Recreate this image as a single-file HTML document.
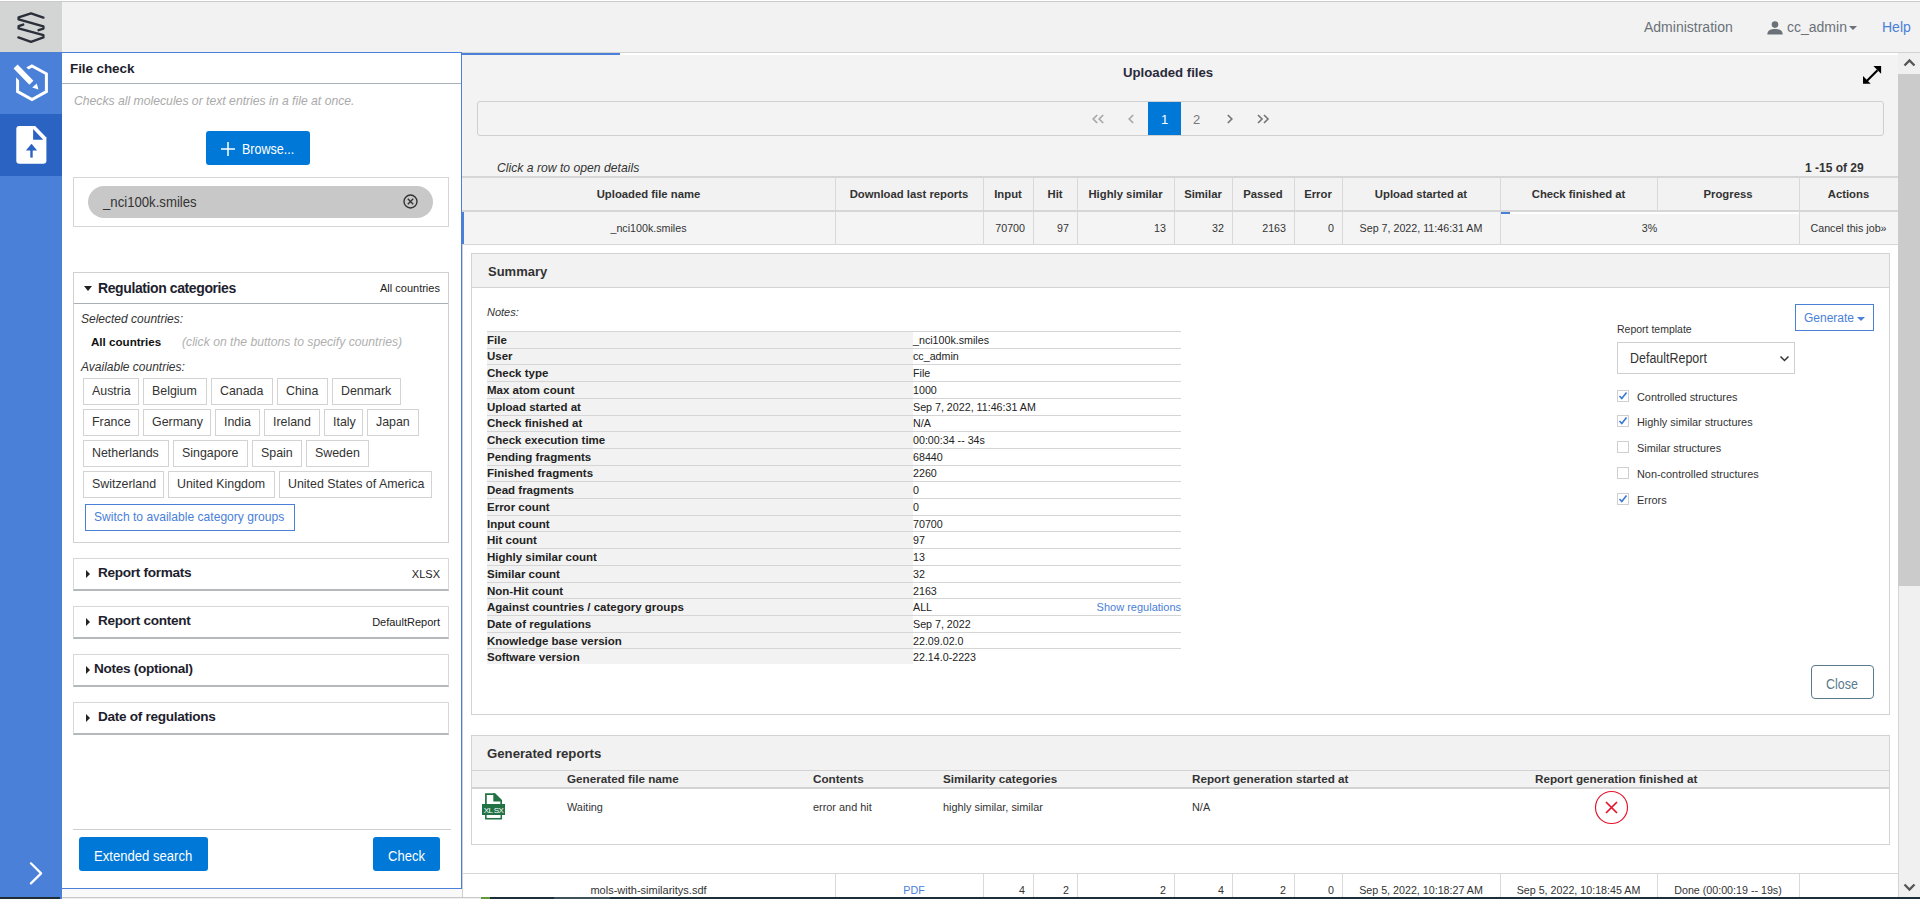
<!DOCTYPE html>
<html><head><meta charset="utf-8">
<style>
*{box-sizing:border-box;margin:0;padding:0}
html,body{width:1920px;height:899px;overflow:hidden;background:#fff;font-family:"Liberation Sans",sans-serif;color:#333}
.a{position:absolute}
.t{position:absolute;white-space:nowrap;line-height:1}
/* sidebar */
#sb{left:0;top:0;width:62px;height:899px;background:#4a80d8}
#logo{left:0;top:0;width:62px;height:52px;background:#d3d4d4}
#hdr{left:62px;top:0;width:1858px;height:53px;background:#f2f2f2;border-top:2px solid #fff;border-bottom:1px solid #d2d2d2}
/* left panel */
#lp{left:62px;top:52px;width:400px;height:837px;background:#fff;border-top:1px solid #4a80d8;border-right:1px solid #4a80d8;border-bottom:1px solid #4a80d8}
.box{position:absolute;left:73px;width:376px;border:1px solid #d0d0d0;background:#fff}
.cbtn{position:absolute;height:27px;border:1px solid #d3d3d3;background:#fff;font-size:12.4px;color:#333;line-height:25px;text-align:left;padding-left:8px;white-space:nowrap}
.btn{position:absolute;background:#0078d7;color:#fff;border-radius:3px;text-align:center}
.ph{position:absolute;left:73px;width:376px;height:33px;background:#fff;border:1px solid #d8d8d8;border-bottom:2px solid #b4b9be}
.ph .tt{position:absolute;left:24px;top:7px;font-size:13.6px;letter-spacing:-0.3px;font-weight:bold;color:#1e1e2e;line-height:1}
.ph .tri{position:absolute;left:12px;top:11px;width:0;height:0;border-top:4px solid transparent;border-bottom:4px solid transparent;border-left:4px solid #222}
.ph .rv{position:absolute;right:8px;top:10px;font-size:11px;color:#222;line-height:1}
.hd{font-size:11.3px;font-weight:bold;color:#333;text-align:center}
.rw{font-size:10.7px;color:#333}
.rw2{font-size:10.9px;color:#333}
.gh{font-size:11.7px;font-weight:bold;color:#333}
table.st{border-collapse:collapse;width:694px;font-size:10.7px;color:#222}
table.st th{background:#f2f2f2;font-weight:bold;text-align:left;width:426px;height:16.67px;line-height:14px;padding:1px 0 0 0;vertical-align:top;border-top:1px solid #d5d5d5;font-size:11.5px}
table.st td{background:#fff;text-align:left;height:16.67px;line-height:14px;padding:1px 0 0 0;vertical-align:top;border-top:1px solid #d5d5d5;position:relative}
.sl{font-size:11.5px;font-weight:bold;color:#222}
.sv{font-size:10.7px;color:#222}
</style></head><body>
<div id="sb" class="a"></div>
<div class="a" style="left:0;top:0;width:1920px;height:1px;background:#fff;z-index:5"></div><div class="a" style="left:0;top:1px;width:1920px;height:1px;background:#cbcbcb;z-index:5"></div>
<div id="logo" class="a">
<svg width="62" height="52" style="position:absolute;left:0;top:0"><g fill="none" stroke="#2b2f3a" stroke-width="2.4" stroke-linejoin="round" stroke-linecap="round">
<polyline points="43.4,17.6 31,13.4 18.6,17.4 18.6,19.4 43.4,26.4 43.4,28.6 38.6,30.2"/>
<polyline points="23.2,24.6 18.6,26.2 18.6,28.4 43.4,35.2 43.4,37.4 31,41.8 18.4,37.4"/>
</g></svg>
</div>
<div class="a" style="left:0;top:114px;width:62px;height:62px;background:#2a63c2"></div>
<svg class="a" style="left:0;top:52px" width="62" height="124">
<polygon points="32,14 46.4,21.8 46.4,39.6 32,47.6 17.6,39.6 17.6,21.8" fill="none" stroke="#fff" stroke-width="3"/>
<line x1="8" y1="6.8" x2="31.4" y2="30.7" stroke="#4a80d8" stroke-width="14.5"/>
<line x1="15.6" y1="14.5" x2="31.4" y2="30.7" stroke="#fff" stroke-width="5.6"/>
<polygon points="32.2,35.6 36.8,31.4 38.4,37.5" fill="#fff"/>
<path d="M19.3,74.1 H35.2 L46.4,85.5 V108.7 a3,3 0 0 1 -3,3 H19.3 a3,3 0 0 1 -3,-3 V77.1 a3,3 0 0 1 3,-3z" fill="#fff"/>
<polygon points="33.1,77 33.1,87.7 43.2,87.7" fill="#2a63c2"/>
<polygon points="25.9,98.6 31.5,91.7 37.1,98.6" fill="#2a63c2"/>
<rect x="30.3" y="98" width="2.4" height="7.6" fill="#2a63c2"/>
</svg>
<svg class="a" style="left:0;top:850px" width="62" height="40"><polyline points="30.9,13.3 41.1,23.4 30.9,33.4" fill="none" stroke="#fff" stroke-width="2.2" stroke-linecap="round" stroke-linejoin="round"/></svg>

<div id="hdr" class="a">
<div class="t" style="left:1582px;top:18px;font-size:14px;color:#6b7178">Administration</div>
<svg class="a" style="left:1705px;top:19px" width="18" height="14"><circle cx="8" cy="3.6" r="3.3" fill="#6b7178"/><path d="M0.3,13.5 C0.3,8.8 4.2,7.9 8,7.9 C11.8,7.9 15.7,8.8 15.7,13.5Z" fill="#6b7178"/></svg>
<div class="t" style="left:1725px;top:18px;font-size:14px;color:#6b7178">cc_admin</div>
<div class="a" style="left:1787px;top:24px;width:0;height:0;border-left:4px solid transparent;border-right:4px solid transparent;border-top:4px solid #6b7178"></div>
<div class="t" style="left:1820px;top:18px;font-size:14px;color:#4a80d8">Help</div>
</div>

<div id="lp" class="a"></div>
<div class="t" style="left:70px;top:62px;font-size:13.5px;letter-spacing:-0.1px;font-weight:bold;color:#1e1e2e">File check</div>
<div class="a" style="left:62px;top:83px;width:399px;height:1px;background:#a9b0b8"></div>
<div class="t" style="left:74px;top:95px;font-size:12.2px;font-style:italic;color:#aaa">Checks all molecules or text entries in a file at once.</div>
<div class="btn" style="left:206px;top:131px;width:104px;height:34px"><svg class="a" style="left:14px;top:10px" width="16" height="16"><path d="M8,1 V15 M1,8 H15" stroke="#fff" stroke-width="1.5"/></svg><span class="t" style="left:36px;top:11px;font-size:14px;transform:scaleX(0.895);transform-origin:0 0">Browse...</span></div>
<div class="box" style="top:177px;height:50px;border-color:#d6d6d6"></div>
<div class="a" style="left:88px;top:186px;width:345px;height:32px;border-radius:16px;background:#c8c8c8"></div>
<div class="t" style="left:103px;top:195px;font-size:14px;color:#333;transform:scaleX(0.94);transform-origin:0 0">_nci100k.smiles</div>
<svg class="a" style="left:402px;top:193px" width="17" height="17"><circle cx="8.5" cy="8.5" r="6.5" fill="none" stroke="#333" stroke-width="1.4"/><path d="M5.8,5.8 L11.2,11.2 M11.2,5.8 L5.8,11.2" stroke="#333" stroke-width="1.4"/></svg>

<!-- regulation categories -->
<div class="box" style="top:272px;height:271px"></div>
<div class="a" style="left:74px;top:303px;width:374px;height:1px;background:#a9b0b8"></div>
<div class="a" style="left:84px;top:286px;width:0;height:0;border-left:4px solid transparent;border-right:4px solid transparent;border-top:5px solid #222"></div>
<div class="t" style="left:98px;top:281px;font-size:14px;letter-spacing:-0.4px;font-weight:bold;color:#1e1e2e">Regulation categories</div>
<div class="t" style="left:380px;top:283px;font-size:11px;color:#222">All countries</div>
<div class="t" style="left:81px;top:313px;font-size:12px;font-style:italic;color:#333">Selected countries:</div>
<div class="t" style="left:91px;top:336px;font-size:11.6px;font-weight:bold;color:#111">All countries</div>
<div class="t" style="left:182px;top:336px;font-size:12.2px;font-style:italic;color:#b0b0b0">(click on the buttons to specify countries)</div>
<div class="t" style="left:81px;top:361px;font-size:12px;font-style:italic;color:#333">Available countries:</div>

<div class="cbtn" style="left:83px;top:378px;width:56px">Austria</div>
<div class="cbtn" style="left:143px;top:378px;width:64px">Belgium</div>
<div class="cbtn" style="left:211px;top:378px;width:62px">Canada</div>
<div class="cbtn" style="left:277px;top:378px;width:51px">China</div>
<div class="cbtn" style="left:332px;top:378px;width:69px">Denmark</div>

<div class="cbtn" style="left:83px;top:409px;width:56px">France</div>
<div class="cbtn" style="left:143px;top:409px;width:68px">Germany</div>
<div class="cbtn" style="left:215px;top:409px;width:45px">India</div>
<div class="cbtn" style="left:264px;top:409px;width:56px">Ireland</div>
<div class="cbtn" style="left:324px;top:409px;width:39px">Italy</div>
<div class="cbtn" style="left:367px;top:409px;width:52px">Japan</div>

<div class="cbtn" style="left:83px;top:440px;width:86px">Netherlands</div>
<div class="cbtn" style="left:173px;top:440px;width:75px">Singapore</div>
<div class="cbtn" style="left:252px;top:440px;width:50px">Spain</div>
<div class="cbtn" style="left:306px;top:440px;width:63px">Sweden</div>

<div class="cbtn" style="left:83px;top:471px;width:81px">Switzerland</div>
<div class="cbtn" style="left:168px;top:471px;width:107px">United Kingdom</div>
<div class="cbtn" style="left:279px;top:471px;width:153px">United States of America</div>

<div class="cbtn" style="left:85px;top:504px;width:210px;border-color:#4a80d8;color:#4a80d8;font-size:12.1px">Switch to available category groups</div>

<div class="ph" style="top:558px"><div class="tri"></div><div class="tt">Report formats</div><div class="rv">XLSX</div></div>
<div class="ph" style="top:606px"><div class="tri"></div><div class="tt">Report content</div><div class="rv">DefaultReport</div></div>
<div class="ph" style="top:654px"><div class="tri"></div><div class="tt" style="left:20px">Notes (optional)</div></div>
<div class="ph" style="top:702px"><div class="tri"></div><div class="tt">Date of regulations</div></div>

<div class="a" style="left:73px;top:829px;width:378px;height:1px;background:#cfcfcf"></div>
<div class="btn" style="left:79px;top:837px;width:129px;height:34px"><span class="t" style="left:15px;top:12px;font-size:14px;transform:scaleX(0.935);transform-origin:0 0">Extended search</span></div>
<div class="btn" style="left:373px;top:837px;width:67px;height:34px"><span class="t" style="left:15px;top:12px;font-size:14px;transform:scaleX(0.93);transform-origin:0 0">Check</span></div>
<div class="a" style="left:62px;top:889px;width:400px;height:8px;background:#f9f9f9"></div>

<!-- MAIN -->

<div class="a" style="left:462px;top:53px;width:1436px;height:124px;background:#f3f3f3"></div>
<div class="a" style="left:462px;top:53px;width:1436px;height:2px;background:#fff"></div>
<div class="a" style="left:462px;top:53px;width:158px;height:2px;background:#4a80d8"></div>
<div class="t" style="left:1123px;top:66px;font-size:13.2px;font-weight:bold;color:#2a2a3a">Uploaded files</div>
<svg class="a" style="left:1860px;top:64px" width="24" height="24"><g fill="#000"><line x1="6" y1="17.8" x2="17.5" y2="6.3" stroke="#000" stroke-width="2.2"/><polygon points="13.4,2 21.1,2 21.1,9.7"/><polygon points="3,12.1 3,19.8 10.7,19.8"/></g></svg>
<div class="a" style="left:477px;top:101px;width:1407px;height:35px;border:1px solid #cfcfcf;border-radius:3px;background:#f3f3f3"></div>
<div class="a" style="left:1148px;top:102px;width:33px;height:33px;background:#0078d7"></div>
<svg class="a" style="left:1088px;top:110px" width="200" height="18"><g fill="none" stroke-width="1.7" stroke-linecap="butt" stroke-linejoin="miter">
<polyline points="9.2,5 5.2,9 9.2,13" stroke="#a8a8a8"/><polyline points="15.2,5 11.2,9 15.2,13" stroke="#a8a8a8"/>
<polyline points="45.2,5 41.2,9 45.2,13" stroke="#a8a8a8"/>
<polyline points="139.8,5 143.8,9 139.8,13" stroke="#777"/>
<polyline points="170,5 174,9 170,13" stroke="#777"/><polyline points="176,5 180,9 176,13" stroke="#777"/>
</g></svg>
<div class="t" style="left:1161px;top:113px;font-size:13px;color:#fff">1</div>
<div class="t" style="left:1193px;top:113px;font-size:13px;color:#777">2</div>
<div class="t" style="left:497px;top:162px;font-size:12.2px;font-style:italic;color:#333">Click a row to open details</div>
<div class="t" style="left:1805px;top:162px;font-size:12px;font-weight:bold;color:#333">1 -15 of 29</div>

<!-- table -->
<div class="a" style="left:462px;top:176px;width:1436px;height:2px;background:#d6d6d6"></div>
<div class="a" style="left:462px;top:178px;width:1436px;height:32px;background:#f2f2f2"></div>
<div class="a" style="left:462px;top:210px;width:1436px;height:2px;background:#d6d6d6"></div>
<div class="a" style="left:462px;top:212px;width:1436px;height:32px;background:#f4f4f4"></div>
<div class="a" style="left:462px;top:244px;width:1436px;height:1px;background:#d6d6d6"></div>
<div class="a" style="left:462px;top:212px;width:2px;height:32px;background:#4a80d8"></div>
<div class="a" style="left:1501px;top:212px;width:298px;height:2px;background:#fff"></div>
<div class="a" style="left:1501px;top:212px;width:9px;height:2px;background:#4a80d8"></div>
<div class="a" style="left:835px;top:178px;width:1px;height:32px;background:#d9d9d9"></div>
<div class="a" style="left:983px;top:178px;width:1px;height:32px;background:#d9d9d9"></div>
<div class="a" style="left:1033px;top:178px;width:1px;height:32px;background:#d9d9d9"></div>
<div class="a" style="left:1077px;top:178px;width:1px;height:32px;background:#d9d9d9"></div>
<div class="a" style="left:1174px;top:178px;width:1px;height:32px;background:#d9d9d9"></div>
<div class="a" style="left:1232px;top:178px;width:1px;height:32px;background:#d9d9d9"></div>
<div class="a" style="left:1294px;top:178px;width:1px;height:32px;background:#d9d9d9"></div>
<div class="a" style="left:1342px;top:178px;width:1px;height:32px;background:#d9d9d9"></div>
<div class="a" style="left:1500px;top:178px;width:1px;height:32px;background:#d9d9d9"></div>
<div class="a" style="left:1657px;top:178px;width:1px;height:32px;background:#d9d9d9"></div>
<div class="a" style="left:1799px;top:178px;width:1px;height:32px;background:#d9d9d9"></div>
<div class="a" style="left:835px;top:212px;width:1px;height:32px;background:#d9d9d9"></div>
<div class="a" style="left:983px;top:212px;width:1px;height:32px;background:#d9d9d9"></div>
<div class="a" style="left:1033px;top:212px;width:1px;height:32px;background:#d9d9d9"></div>
<div class="a" style="left:1077px;top:212px;width:1px;height:32px;background:#d9d9d9"></div>
<div class="a" style="left:1174px;top:212px;width:1px;height:32px;background:#d9d9d9"></div>
<div class="a" style="left:1232px;top:212px;width:1px;height:32px;background:#d9d9d9"></div>
<div class="a" style="left:1294px;top:212px;width:1px;height:32px;background:#d9d9d9"></div>
<div class="a" style="left:1342px;top:212px;width:1px;height:32px;background:#d9d9d9"></div>
<div class="a" style="left:1500px;top:212px;width:1px;height:32px;background:#d9d9d9"></div>
<div class="a" style="left:1799px;top:212px;width:1px;height:32px;background:#d9d9d9"></div>
<div class="t hd" style="left:462px;width:373px;top:189px">Uploaded file name</div>
<div class="t hd" style="left:835px;width:148px;top:189px">Download last reports</div>
<div class="t hd" style="left:983px;width:50px;top:189px">Input</div>
<div class="t hd" style="left:1033px;width:44px;top:189px">Hit</div>
<div class="t hd" style="left:1077px;width:97px;top:189px">Highly similar</div>
<div class="t hd" style="left:1174px;width:58px;top:189px">Similar</div>
<div class="t hd" style="left:1232px;width:62px;top:189px">Passed</div>
<div class="t hd" style="left:1294px;width:48px;top:189px">Error</div>
<div class="t hd" style="left:1342px;width:158px;top:189px">Upload started at</div>
<div class="t hd" style="left:1500px;width:157px;top:189px">Check finished at</div>
<div class="t hd" style="left:1657px;width:142px;top:189px">Progress</div>
<div class="t hd" style="left:1799px;width:99px;top:189px">Actions</div>
<div class="t rw" style="left:462px;width:373px;top:223px;text-align:center">_nci100k.smiles</div>
<div class="t rw" style="left:983px;width:50px;top:223px;text-align:right;padding-right:8px">70700</div>
<div class="t rw" style="left:1033px;width:44px;top:223px;text-align:right;padding-right:8px">97</div>
<div class="t rw" style="left:1077px;width:97px;top:223px;text-align:right;padding-right:8px">13</div>
<div class="t rw" style="left:1174px;width:58px;top:223px;text-align:right;padding-right:8px">32</div>
<div class="t rw" style="left:1232px;width:62px;top:223px;text-align:right;padding-right:8px">2163</div>
<div class="t rw" style="left:1294px;width:48px;top:223px;text-align:right;padding-right:8px">0</div>
<div class="t rw" style="left:1342px;width:158px;top:223px;text-align:center">Sep 7, 2022, 11:46:31 AM</div>
<div class="t rw" style="left:1500px;width:299px;top:223px;text-align:center">3%</div>
<div class="t rw" style="left:1799px;width:99px;top:223px;text-align:center">Cancel this job&raquo;</div>

<!-- details area -->
<div class="a" style="left:462px;top:245px;width:1436px;height:628px;background:#fff"></div>
<div class="a" style="left:462px;top:245px;width:1px;height:654px;background:#d0d0d0"></div>
<!-- summary panel -->
<div class="a" style="left:471px;top:253px;width:1419px;height:462px;border:1px solid #d3d3d3;background:#fff"></div>
<div class="a" style="left:472px;top:254px;width:1417px;height:34px;background:#f2f2f2;border-bottom:1px solid #d3d3d3"></div>
<div class="t" style="left:488px;top:265px;font-size:13px;font-weight:bold;color:#333">Summary</div>
<div class="t" style="left:487px;top:307px;font-size:11px;font-style:italic;color:#333">Notes:</div>
<div class="a" style="left:487px;top:331px;width:694px;height:1px;background:#d5d5d5"></div><div class="a" style="left:487px;top:332px;width:426px;height:16px;background:#f2f2f2"></div><div class="t sl" style="left:487px;top:335px">File</div><div class="t sv" style="left:913px;top:335px">_nci100k.smiles</div>
<div class="a" style="left:487px;top:348px;width:694px;height:1px;background:#d5d5d5"></div><div class="a" style="left:487px;top:349px;width:426px;height:15px;background:#f2f2f2"></div><div class="t sl" style="left:487px;top:351px">User</div><div class="t sv" style="left:913px;top:351px">cc_admin</div>
<div class="a" style="left:487px;top:364px;width:694px;height:1px;background:#d5d5d5"></div><div class="a" style="left:487px;top:365px;width:426px;height:16px;background:#f2f2f2"></div><div class="t sl" style="left:487px;top:368px">Check type</div><div class="t sv" style="left:913px;top:368px">File</div>
<div class="a" style="left:487px;top:381px;width:694px;height:1px;background:#d5d5d5"></div><div class="a" style="left:487px;top:382px;width:426px;height:16px;background:#f2f2f2"></div><div class="t sl" style="left:487px;top:385px">Max atom count</div><div class="t sv" style="left:913px;top:385px">1000</div>
<div class="a" style="left:487px;top:398px;width:694px;height:1px;background:#d5d5d5"></div><div class="a" style="left:487px;top:399px;width:426px;height:16px;background:#f2f2f2"></div><div class="t sl" style="left:487px;top:402px">Upload started at</div><div class="t sv" style="left:913px;top:402px">Sep 7, 2022, 11:46:31 AM</div>
<div class="a" style="left:487px;top:415px;width:694px;height:1px;background:#d5d5d5"></div><div class="a" style="left:487px;top:416px;width:426px;height:15px;background:#f2f2f2"></div><div class="t sl" style="left:487px;top:418px">Check finished at</div><div class="t sv" style="left:913px;top:418px">N/A</div>
<div class="a" style="left:487px;top:431px;width:694px;height:1px;background:#d5d5d5"></div><div class="a" style="left:487px;top:432px;width:426px;height:16px;background:#f2f2f2"></div><div class="t sl" style="left:487px;top:435px">Check execution time</div><div class="t sv" style="left:913px;top:435px">00:00:34 -- 34s</div>
<div class="a" style="left:487px;top:448px;width:694px;height:1px;background:#d5d5d5"></div><div class="a" style="left:487px;top:449px;width:426px;height:16px;background:#f2f2f2"></div><div class="t sl" style="left:487px;top:452px">Pending fragments</div><div class="t sv" style="left:913px;top:452px">68440</div>
<div class="a" style="left:487px;top:465px;width:694px;height:1px;background:#d5d5d5"></div><div class="a" style="left:487px;top:466px;width:426px;height:15px;background:#f2f2f2"></div><div class="t sl" style="left:487px;top:468px">Finished fragments</div><div class="t sv" style="left:913px;top:468px">2260</div>
<div class="a" style="left:487px;top:481px;width:694px;height:1px;background:#d5d5d5"></div><div class="a" style="left:487px;top:482px;width:426px;height:16px;background:#f2f2f2"></div><div class="t sl" style="left:487px;top:485px">Dead fragments</div><div class="t sv" style="left:913px;top:485px">0</div>
<div class="a" style="left:487px;top:498px;width:694px;height:1px;background:#d5d5d5"></div><div class="a" style="left:487px;top:499px;width:426px;height:16px;background:#f2f2f2"></div><div class="t sl" style="left:487px;top:502px">Error count</div><div class="t sv" style="left:913px;top:502px">0</div>
<div class="a" style="left:487px;top:515px;width:694px;height:1px;background:#d5d5d5"></div><div class="a" style="left:487px;top:516px;width:426px;height:15px;background:#f2f2f2"></div><div class="t sl" style="left:487px;top:519px">Input count</div><div class="t sv" style="left:913px;top:519px">70700</div>
<div class="a" style="left:487px;top:531px;width:694px;height:1px;background:#d5d5d5"></div><div class="a" style="left:487px;top:532px;width:426px;height:16px;background:#f2f2f2"></div><div class="t sl" style="left:487px;top:535px">Hit count</div><div class="t sv" style="left:913px;top:535px">97</div>
<div class="a" style="left:487px;top:548px;width:694px;height:1px;background:#d5d5d5"></div><div class="a" style="left:487px;top:549px;width:426px;height:16px;background:#f2f2f2"></div><div class="t sl" style="left:487px;top:552px">Highly similar count</div><div class="t sv" style="left:913px;top:552px">13</div>
<div class="a" style="left:487px;top:565px;width:694px;height:1px;background:#d5d5d5"></div><div class="a" style="left:487px;top:566px;width:426px;height:16px;background:#f2f2f2"></div><div class="t sl" style="left:487px;top:569px">Similar count</div><div class="t sv" style="left:913px;top:569px">32</div>
<div class="a" style="left:487px;top:582px;width:694px;height:1px;background:#d5d5d5"></div><div class="a" style="left:487px;top:583px;width:426px;height:15px;background:#f2f2f2"></div><div class="t sl" style="left:487px;top:586px">Non-Hit count</div><div class="t sv" style="left:913px;top:586px">2163</div>
<div class="a" style="left:487px;top:598px;width:694px;height:1px;background:#d5d5d5"></div><div class="a" style="left:487px;top:599px;width:426px;height:16px;background:#f2f2f2"></div><div class="t sl" style="left:487px;top:602px">Against countries / category groups</div><div class="t sv" style="left:913px;top:602px">ALL</div><div class="t sv" style="left:1091px;width:90px;text-align:right;top:602px;color:#4a80d8;font-size:11px">Show regulations</div>
<div class="a" style="left:487px;top:615px;width:694px;height:1px;background:#d5d5d5"></div><div class="a" style="left:487px;top:616px;width:426px;height:16px;background:#f2f2f2"></div><div class="t sl" style="left:487px;top:619px">Date of regulations</div><div class="t sv" style="left:913px;top:619px">Sep 7, 2022</div>
<div class="a" style="left:487px;top:632px;width:694px;height:1px;background:#d5d5d5"></div><div class="a" style="left:487px;top:633px;width:426px;height:15px;background:#f2f2f2"></div><div class="t sl" style="left:487px;top:636px">Knowledge base version</div><div class="t sv" style="left:913px;top:636px">22.09.02.0</div>
<div class="a" style="left:487px;top:648px;width:694px;height:1px;background:#d5d5d5"></div><div class="a" style="left:487px;top:649px;width:426px;height:15px;background:#f2f2f2"></div><div class="t sl" style="left:487px;top:652px">Software version</div><div class="t sv" style="left:913px;top:652px">22.14.0-2223</div>


<div class="a" style="left:1795px;top:304px;width:79px;height:27px;border:1px solid #4a80d8"></div>
<div class="t" style="left:1804px;top:312px;font-size:12px;color:#4a80d8">Generate</div>
<div class="a" style="left:1857px;top:317px;width:0;height:0;border-left:4px solid transparent;border-right:4px solid transparent;border-top:4px solid #4a80d8"></div>
<div class="t" style="left:1617px;top:324px;font-size:10.5px;color:#333">Report template</div>
<div class="a" style="left:1617px;top:342px;width:178px;height:32px;border:1px solid #cfcfcf;background:#fff"></div>
<div class="t" style="left:1630px;top:351px;font-size:14px;color:#333;transform:scaleX(0.89);transform-origin:0 0">DefaultReport</div>
<svg class="a" style="left:1779px;top:355px" width="12" height="8"><polyline points="1.5,1.5 5.5,5.5 9.5,1.5" fill="none" stroke="#333" stroke-width="1.5"/></svg>
<div class="a" style="left:1617px;top:390px;width:12px;height:12px;border:1px solid #cfcfcf;background:#fff"></div>
<svg class="a" style="left:1617px;top:390px" width="12" height="12"><polyline points="2.5,6 4.8,8.6 9.5,2.5" fill="none" stroke="#3a78d8" stroke-width="1.6"/></svg>
<div class="t" style="left:1637px;top:392px;font-size:10.9px;color:#333">Controlled structures</div>
<div class="a" style="left:1617px;top:415px;width:12px;height:12px;border:1px solid #cfcfcf;background:#fff"></div>
<svg class="a" style="left:1617px;top:415px" width="12" height="12"><polyline points="2.5,6 4.8,8.6 9.5,2.5" fill="none" stroke="#3a78d8" stroke-width="1.6"/></svg>
<div class="t" style="left:1637px;top:417px;font-size:10.9px;color:#333">Highly similar structures</div>
<div class="a" style="left:1617px;top:441px;width:12px;height:12px;border:1px solid #cfcfcf;background:#fff"></div>
<div class="t" style="left:1637px;top:443px;font-size:10.9px;color:#333">Similar structures</div>
<div class="a" style="left:1617px;top:467px;width:12px;height:12px;border:1px solid #cfcfcf;background:#fff"></div>
<div class="t" style="left:1637px;top:469px;font-size:10.9px;color:#333">Non-controlled structures</div>
<div class="a" style="left:1617px;top:493px;width:12px;height:12px;border:1px solid #cfcfcf;background:#fff"></div>
<svg class="a" style="left:1617px;top:493px" width="12" height="12"><polyline points="2.5,6 4.8,8.6 9.5,2.5" fill="none" stroke="#3a78d8" stroke-width="1.6"/></svg>
<div class="t" style="left:1637px;top:495px;font-size:10.9px;color:#333">Errors</div>

<div class="a" style="left:1811px;top:665px;width:63px;height:34px;border:1.5px solid #5a7a8c;border-radius:4px"></div>
<div class="t" style="left:1826px;top:677px;font-size:14px;color:#5a7a8c;transform:scaleX(0.89);transform-origin:0 0">Close</div>

<!-- generated reports -->
<div class="a" style="left:471px;top:735px;width:1419px;height:110px;border:1px solid #d3d3d3;background:#fff"></div>
<div class="a" style="left:472px;top:736px;width:1417px;height:35px;background:#f2f2f2;border-bottom:1px solid #d3d3d3"></div>
<div class="t" style="left:487px;top:747px;font-size:13.2px;font-weight:bold;color:#333">Generated reports</div>
<div class="a" style="left:472px;top:771px;width:1417px;height:16px;background:#f2f2f2"></div>
<div class="a" style="left:472px;top:787px;width:1417px;height:2px;background:#d3d3d3"></div>
<div class="t gh" style="left:567px;top:773px">Generated file name</div>
<div class="t gh" style="left:813px;top:773px">Contents</div>
<div class="t gh" style="left:943px;top:773px">Similarity categories</div>
<div class="t gh" style="left:1192px;top:773px">Report generation started at</div>
<div class="t gh" style="left:1535px;top:773px">Report generation finished at</div>
<svg class="a" style="left:470px;top:785px" width="40" height="40"><path d="M15.9,9.1 H24.6 L31.2,15.7 V33.6 H15.9Z" fill="#fff" stroke="#217346" stroke-width="1.7"/><polygon points="23.3,8.3 25,8.3 32,15.3 32,16.4 23.3,16.4" fill="#217346"/><rect x="12" y="19" width="23" height="11" fill="#217346"/><rect x="16.8" y="30" width="13.5" height="2.8" fill="#fff"/><text x="23.5" y="28" font-size="8" font-family="Liberation Sans" fill="#fff" text-anchor="middle" letter-spacing="-0.6">XL SX</text></svg>
<div class="t rw2" style="left:567px;top:802px">Waiting</div>
<div class="t rw2" style="left:813px;top:802px">error and hit</div>
<div class="t rw2" style="left:943px;top:802px">highly similar, similar</div>
<div class="t rw2" style="left:1192px;top:802px">N/A</div>
<svg class="a" style="left:1594px;top:790px" width="36" height="36"><circle cx="17.5" cy="17.5" r="16" fill="none" stroke="#e5132b" stroke-width="1.15"/><path d="M12,12 L23,23 M23,12 L12,23" stroke="#e5132b" stroke-width="1.7"/></svg>

<!-- next row -->
<div class="a" style="left:462px;top:873px;width:1436px;height:1px;background:#d6d6d6"></div>
<div class="a" style="left:835px;top:874px;width:1px;height:25px;background:#d9d9d9"></div>
<div class="a" style="left:983px;top:874px;width:1px;height:25px;background:#d9d9d9"></div>
<div class="a" style="left:1033px;top:874px;width:1px;height:25px;background:#d9d9d9"></div>
<div class="a" style="left:1077px;top:874px;width:1px;height:25px;background:#d9d9d9"></div>
<div class="a" style="left:1174px;top:874px;width:1px;height:25px;background:#d9d9d9"></div>
<div class="a" style="left:1232px;top:874px;width:1px;height:25px;background:#d9d9d9"></div>
<div class="a" style="left:1294px;top:874px;width:1px;height:25px;background:#d9d9d9"></div>
<div class="a" style="left:1342px;top:874px;width:1px;height:25px;background:#d9d9d9"></div>
<div class="a" style="left:1500px;top:874px;width:1px;height:25px;background:#d9d9d9"></div>
<div class="a" style="left:1657px;top:874px;width:1px;height:25px;background:#d9d9d9"></div>
<div class="a" style="left:1799px;top:874px;width:1px;height:25px;background:#d9d9d9"></div>
<div class="t rw" style="left:462px;width:373px;top:885px;text-align:center;font-size:11px">mols-with-similaritys.sdf</div>
<div class="t rw" style="left:840px;width:148px;top:885px;text-align:center;color:#4a80d8">PDF</div>
<div class="t rw" style="left:983px;width:50px;top:885px;text-align:right;padding-right:8px">4</div>
<div class="t rw" style="left:1033px;width:44px;top:885px;text-align:right;padding-right:8px">2</div>
<div class="t rw" style="left:1077px;width:97px;top:885px;text-align:right;padding-right:8px">2</div>
<div class="t rw" style="left:1174px;width:58px;top:885px;text-align:right;padding-right:8px">4</div>
<div class="t rw" style="left:1232px;width:62px;top:885px;text-align:right;padding-right:8px">2</div>
<div class="t rw" style="left:1294px;width:48px;top:885px;text-align:right;padding-right:8px">0</div>
<div class="t rw" style="left:1342px;width:158px;top:885px;text-align:center">Sep 5, 2022, 10:18:27 AM</div>
<div class="t rw" style="left:1500px;width:157px;top:885px;text-align:center">Sep 5, 2022, 10:18:45 AM</div>
<div class="t rw" style="left:1657px;width:142px;top:885px;text-align:center">Done (00:00:19 -- 19s)</div>

<!-- scrollbar -->
<div class="a" style="left:1898px;top:53px;width:22px;height:846px;background:#f0f0f0"></div>
<div class="a" style="left:1898px;top:586px;width:1px;height:313px;background:#d4d4d4"></div>
<div class="a" style="left:1898px;top:74px;width:22px;height:512px;background:#cbcbcb"></div>
<svg class="a" style="left:1899px;top:53px" width="21" height="20"><polyline points="5.5,12.5 10.5,7.5 15.5,12.5" fill="none" stroke="#555" stroke-width="2.3"/></svg>
<svg class="a" style="left:1899px;top:878px" width="21" height="20"><polyline points="5.5,6.5 10.5,11.5 15.5,6.5" fill="none" stroke="#555" stroke-width="2.3"/></svg>

<!-- bottom strip -->
<div class="a" style="left:62px;top:897px;width:420px;height:1px;background:#c8c8c8"></div>
<div class="a" style="left:62px;top:898px;width:420px;height:1px;background:#efefef"></div>
<div class="a" style="left:0;top:897px;width:60px;height:2px;background:#1f2d37"></div>
<div class="a" style="left:481px;top:897px;width:1439px;height:2px;background:#1e2f3a"></div>
<div class="a" style="left:481px;top:897px;width:9px;height:2px;background:#5f9a3a"></div>
<div class="a" style="left:554px;top:897px;width:56px;height:2px;background:#3f5058"></div>

</body></html>
